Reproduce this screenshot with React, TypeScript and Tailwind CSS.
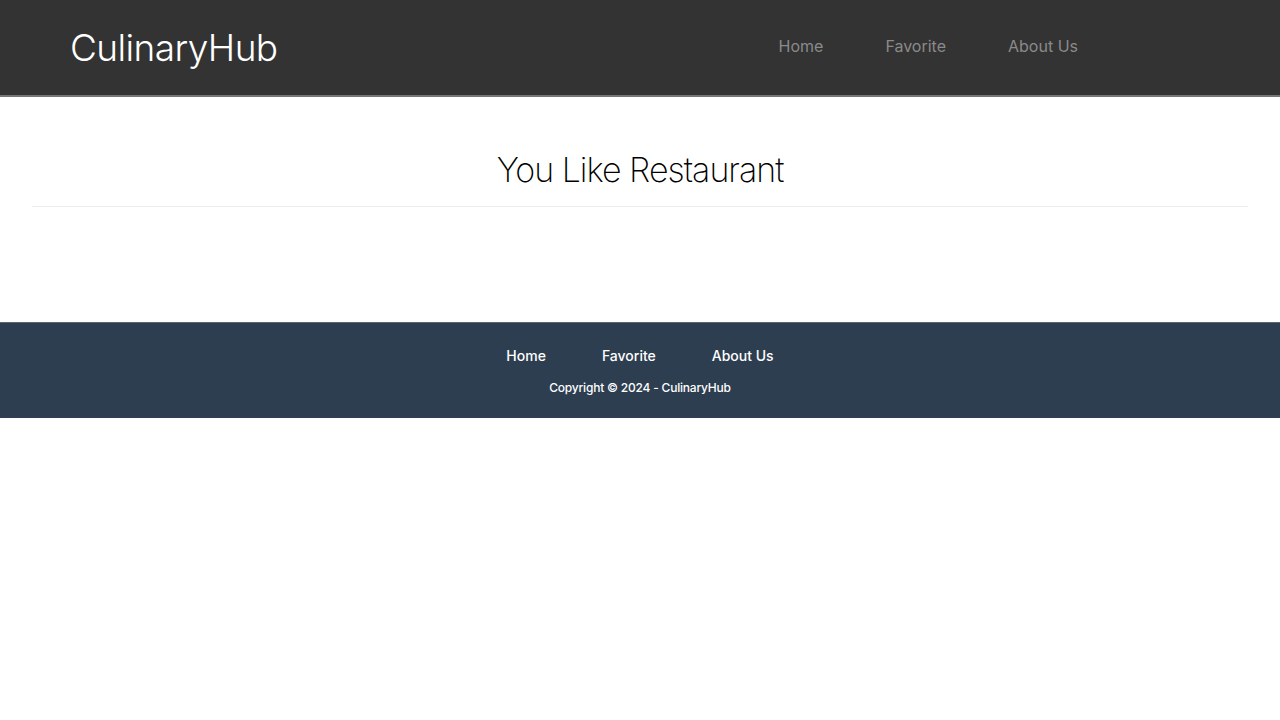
const NAV_LINKS = ["Home", "Favorite", "About Us"]

function Header() {
  return (
    <header className="h-[97px] bg-[#333333] border-b-2 border-[#767676] flex items-center justify-between pl-[70px] pr-[202px]">
      <h1 className="text-[37px] font-light text-white tracking-[-0.6px] leading-none">CulinaryHub</h1>
      <nav className="flex gap-[62px] -mt-[4px]">
        {NAV_LINKS.map((link) => (
          <a key={link} href="#" className="text-[16px] text-[#8a8a8a]">
            {link}
          </a>
        ))}
      </nav>
    </header>
  )
}

function Footer() {
  return (
    <footer className="bg-[#2d3e50] border-t border-[#5a6673] h-[96px] flex flex-col items-center pt-[22px]">
      <nav className="flex gap-[56px]">
        {NAV_LINKS.map((link) => (
          <a key={link} href="#" className="text-[14px] font-medium text-white">
            {link}
          </a>
        ))}
      </nav>
      <p className="mt-[13px] text-[12px] text-white font-medium tracking-[-0.2px]">Copyright © 2024 - CulinaryHub</p>
    </footer>
  )
}

export default function App() {
  return (
    <div className="min-h-[720px] bg-white font-['Inter','Liberation_Sans',sans-serif]">
      <Header />
      <main className="h-[225px] px-[32px] pt-[47px]">
        <h2 className="text-center text-[34px] font-extralight text-black pb-[11px] border-b border-[#ececec] tracking-[-1px]">
          You Like Restaurant
        </h2>
      </main>
      <Footer />
    </div>
  )
}
